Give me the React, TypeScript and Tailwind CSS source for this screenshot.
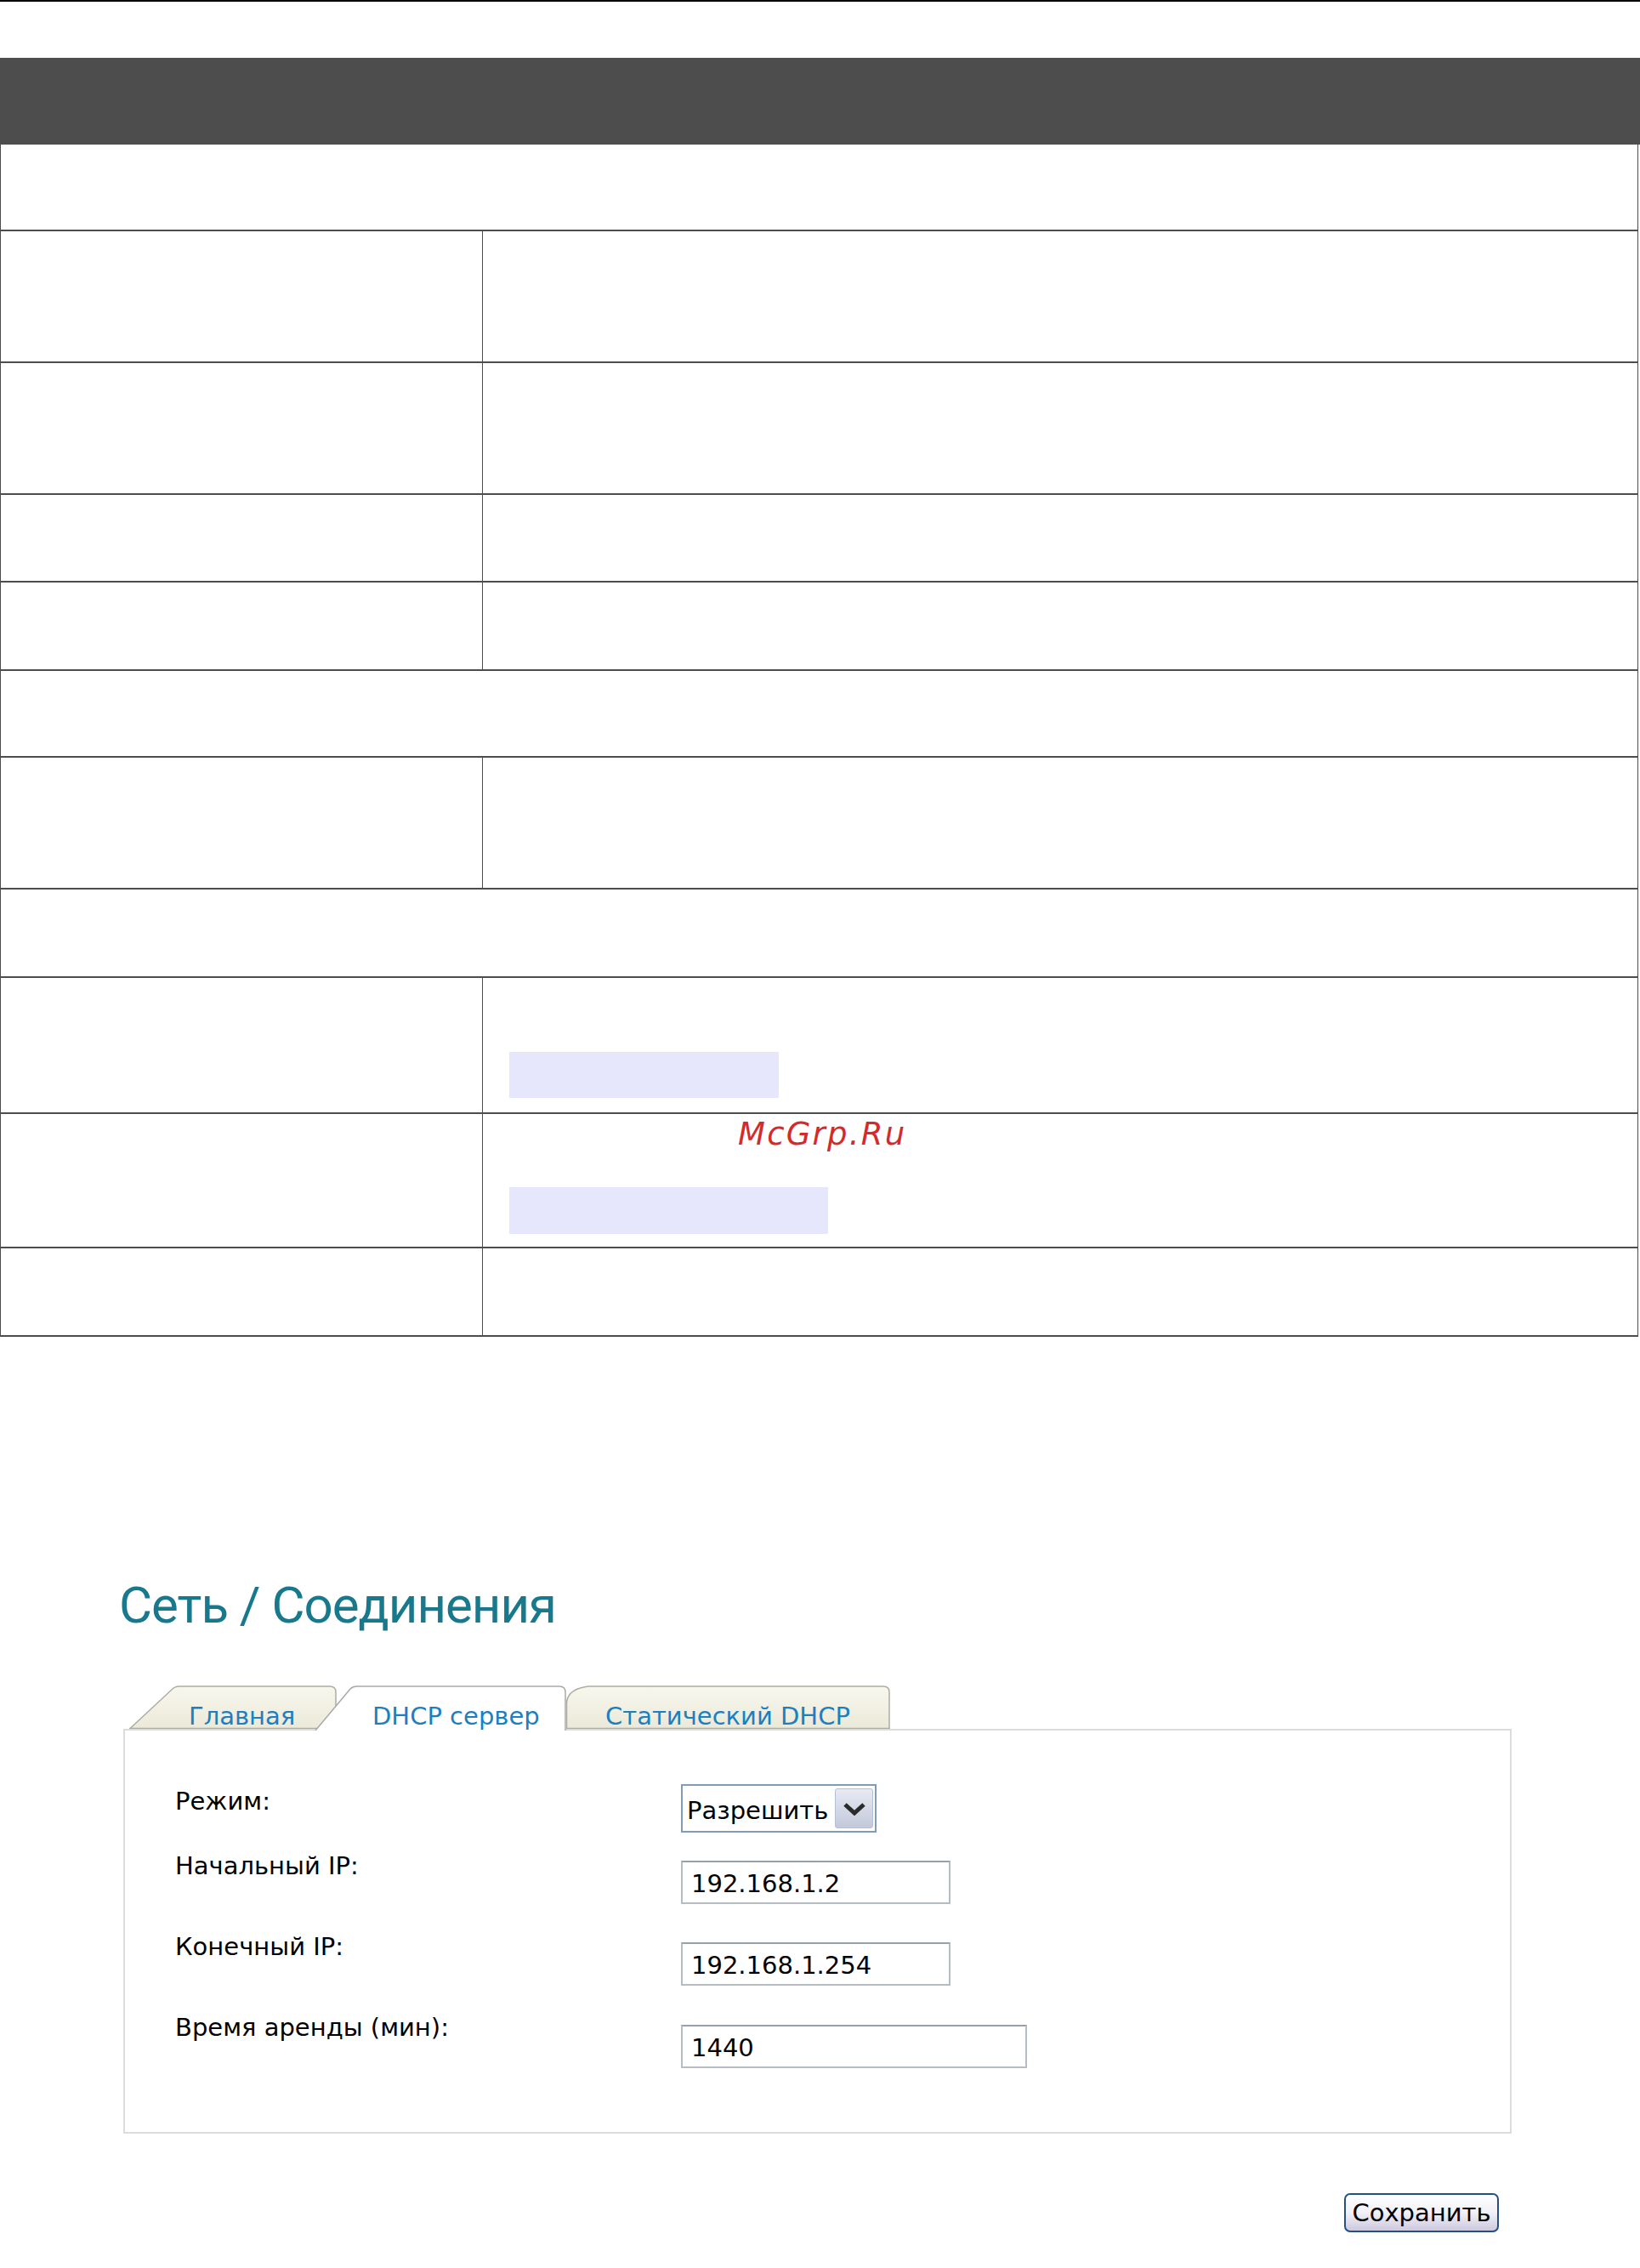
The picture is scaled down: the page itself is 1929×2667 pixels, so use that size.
import React from "react";

function FullRow({ cls }: { cls: string }) {
  return <div className={cls} />;
}

function TwoRow({ cls, children }: { cls: string; children?: React.ReactNode }) {
  return (
    <div className={cls}>
      <div className="w-[567px] h-full border-r border-[#4d4d4d] shrink-0" />
      <div className="relative flex-1 h-full">{children}</div>
    </div>
  );
}

function Tab1() {
  return (
    <div className="relative w-[244px] h-[51px] shrink-0">
      <svg className="absolute inset-0" width="244" height="51" viewBox="0 0 244 51">
        <defs>
          <linearGradient id="cream1" x1="0" y1="0" x2="0" y2="1">
            <stop offset="0" stopColor="#f8f7ee" />
            <stop offset="1" stopColor="#ebe9d8" />
          </linearGradient>
        </defs>
        <path d="M1,51 L52,3 Q55,1 59,1 L236,1 Q243,1 243,8 L243,51 Z" fill="url(#cream1)" />
        <path d="M1,50.5 L52,3 Q55,1 59,1 L236,1 Q243,1 243,8 L243,51 M0,50.5 L244,50.5" fill="none" stroke="#aeada3" strokeWidth="1.5" />
      </svg>
      <div className="relative pl-[70px] pt-[20px] leading-[32px] text-[29px] text-[#1b7fc1]">Главная</div>
    </div>
  );
}

function TabActive() {
  return (
    <div className="relative z-10 -ml-[26px] -mb-[2px] w-[296px] h-[53px] shrink-0">
      <svg className="absolute inset-0" width="296" height="53" viewBox="0 0 296 53">
        <path d="M1,53 L42,4 Q45,1 50,1 L288,1 Q295,1 295,8 L295,53 Z" fill="#ffffff" />
        <path d="M1,53 L42,4 Q45,1 50,1 L288,1 Q295,1 295,8 L295,53" fill="none" stroke="#a9a9a4" strokeWidth="1.5" />
      </svg>
      <div className="relative pl-[68px] pt-[20px] leading-[32px] text-[29px] text-[#1b7fc1] whitespace-nowrap">DHCP сервер</div>
    </div>
  );
}

function Tab3() {
  return (
    <div className="relative w-[381px] h-[51px] shrink-0">
      <svg className="absolute inset-0" width="381" height="51" viewBox="0 0 381 51">
        <defs>
          <linearGradient id="cream3" x1="0" y1="0" x2="0" y2="1">
            <stop offset="0" stopColor="#f8f7ee" />
            <stop offset="1" stopColor="#ebe9d8" />
          </linearGradient>
        </defs>
        <path d="M0.5,51 L0.5,20 Q2,4 26,1 L373,1 Q380,1 380,8 L380,51 Z" fill="url(#cream3)" />
        <path d="M0.5,51 L0.5,20 Q2,4 26,1 L373,1 Q380,1 380,8 L380,51 M0,50.5 L381,50.5" fill="none" stroke="#aeada3" strokeWidth="1.5" />
      </svg>
      <div className="relative pl-[46px] pt-[20px] leading-[32px] text-[29px] text-[#1b7fc1] whitespace-nowrap">Статический DHCP</div>
    </div>
  );
}

export default function App() {
  return (
    <div className="w-[1929px] h-[2667px] bg-white font-['DejaVu_Sans',sans-serif] text-black overflow-hidden">
      <div className="h-[2px] bg-black" />
      <div className="h-[66px]" />
      <div className="h-[102px] bg-[#4d4d4d]" />
      <div className="w-[1927px] border-x border-[#4d4d4d]">
        <FullRow cls="h-[102px] border-b-2 border-[#4d4d4d]" />
        <TwoRow cls="flex h-[155px] border-b-2 border-[#4d4d4d]" />
        <TwoRow cls="flex h-[155px] border-b-2 border-[#4d4d4d]" />
        <TwoRow cls="flex h-[103px] border-b-2 border-[#4d4d4d]" />
        <TwoRow cls="flex h-[104px] border-b-2 border-[#4d4d4d]" />
        <FullRow cls="h-[102px] border-b-2 border-[#4d4d4d]" />
        <TwoRow cls="flex h-[155px] border-b-2 border-[#4d4d4d]" />
        <FullRow cls="h-[104px] border-b-2 border-[#4d4d4d]" />
        <TwoRow cls="flex h-[160px] border-b-2 border-[#4d4d4d]">
          <div className="ml-[31px] mt-[87px] w-[317px] h-[54px] bg-[#e6e6fc]" />
        </TwoRow>
        <TwoRow cls="flex h-[158px] border-b-2 border-[#4d4d4d]">
          <div className="ml-[31px] mt-[86px] w-[375px] h-[55px] bg-[#e6e6fc]" />
          <div className="absolute left-[300px] top-[2px] text-[37px] leading-[44px] italic tracking-[0.06em] text-[#d42a2a]">McGrp.Ru</div>
        </TwoRow>
        <TwoRow cls="flex h-[104px] border-b-2 border-[#4d4d4d]" />
      </div>

      <div className="ml-[145px] w-[1633px]">
        <div className="mt-[286px] -ml-[5px] h-[60px] font-['Roboto',sans-serif] text-[60px] leading-[60px] tracking-[-1px] text-[#17798b]">
          Сеть / Соединения
        </div>

        <div className="mt-[64px] ml-[7px] flex items-end h-[51px]">
          <Tab1 />
          <TabActive />
          <Tab3 />
        </div>

        <div className="h-[476px] border-2 border-[#dcdcdc] pt-[63px] pl-[59px] text-[29px] leading-[32px]">
          <div className="flex h-[80px]">
            <div className="w-[595px] pt-[4px]">Режим:</div>
            <div className="flex items-center w-[230px] h-[57px] border-2 border-[#7f9db9] bg-white pl-[5px] pr-[2px]">
              <span className="flex-1 pt-[4px] whitespace-nowrap">Разрешить</span>
              <div className="w-[45px] h-[47px] rounded-[3px] border border-[#b5bfd6] bg-linear-to-b from-[#e8ebf4] to-[#c3c8da] flex items-center justify-center">
                <svg width="28" height="16" viewBox="0 0 28 16">
                  <polyline points="3,3 14,13 25,3" fill="none" stroke="#2b2b2b" strokeWidth="5" strokeLinejoin="miter" />
                </svg>
              </div>
            </div>
          </div>
          <div className="flex h-[95px]">
            <div className="w-[595px]">Начальный IP:</div>
            <input
              readOnly
              defaultValue="192.168.1.2"
              className="mt-[10px] w-[317px] h-[51px] border-2 border-[#b6bcc3] border-t-[#9aa0a8] pl-[10px] pt-[3px] text-[29px] text-black outline-none font-['DejaVu_Sans',sans-serif]"
            />
          </div>
          <div className="flex h-[95px]">
            <div className="w-[595px]">Конечный IP:</div>
            <input
              readOnly
              defaultValue="192.168.1.254"
              className="mt-[11px] w-[317px] h-[51px] border-2 border-[#b6bcc3] border-t-[#9aa0a8] pl-[10px] pt-[3px] text-[29px] text-black outline-none font-['DejaVu_Sans',sans-serif]"
            />
          </div>
          <div className="flex h-[95px]">
            <div className="w-[595px]">Время аренды (мин):</div>
            <input
              readOnly
              defaultValue="1440"
              className="mt-[13px] w-[407px] h-[51px] border-2 border-[#b6bcc3] border-t-[#9aa0a8] pl-[10px] pt-[3px] text-[29px] text-black outline-none font-['DejaVu_Sans',sans-serif]"
            />
          </div>
        </div>

        <div className="mt-[70px] flex justify-end pr-[15px]">
          <button className="w-[182px] h-[46px] rounded-[7px] border-2 border-[#25507f] bg-linear-to-b from-white via-[#f1f0f7] to-[#cdc9df] text-[29px] leading-[32px] text-black flex items-center justify-center font-['DejaVu_Sans',sans-serif]">
            Сохранить
          </button>
        </div>
      </div>
    </div>
  );
}
